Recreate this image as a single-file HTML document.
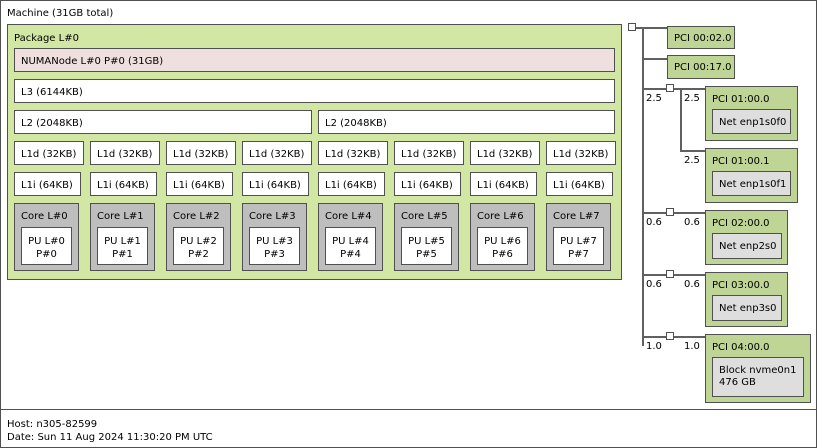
<!DOCTYPE html>
<html><head><meta charset="utf-8"><style>
*{box-sizing:border-box;margin:0;padding:0}
body{width:817px;height:448px;background:#fff;position:relative;overflow:hidden;font-family:"DejaVu Sans","Liberation Sans",sans-serif;font-size:10px;color:#000}
.b{position:absolute;border:1px solid #505050;line-height:12px;padding:7px 0 0 6px;white-space:nowrap}
.w{background:#fff}.g{background:#d2e7a4}.n{background:#efdfde}.c{background:#bebebe}.p{background:#bed595;padding-top:6px}.d{background:#dedede}
.b.pu{text-align:center;padding:7px 0 0 0;line-height:13px}
.t{position:absolute;white-space:nowrap;line-height:12px}
.l{position:absolute;background:#606060}
.sq{position:absolute;width:8px;height:8px;border:1px solid #505050;background:#fff}
</style></head><body>
<div class="b w" style="left:0;top:0;width:817px;height:410px"></div>
<div class="t" style="left:7px;top:8px">Machine (31GB total)</div>
<div class="b g" style="left:7px;top:24px;width:615px;height:256px;padding-top:8px">Package L#0</div>
<div class="b n" style="left:14px;top:48px;width:601px;height:24px">NUMANode L#0 P#0 (31GB)</div>
<div class="b w" style="left:14px;top:79px;width:601px;height:24px">L3 (6144KB)</div>
<div class="b w" style="left:14px;top:110px;width:298px;height:24px">L2 (2048KB)</div>
<div class="b w" style="left:318px;top:110px;width:297px;height:24px">L2 (2048KB)</div>

<div class="b w" style="left:14px;top:141px;width:70px;height:24px">L1d (32KB)</div>
<div class="b w" style="left:90px;top:141px;width:70px;height:24px">L1d (32KB)</div>
<div class="b w" style="left:166px;top:141px;width:70px;height:24px">L1d (32KB)</div>
<div class="b w" style="left:242px;top:141px;width:70px;height:24px">L1d (32KB)</div>
<div class="b w" style="left:318px;top:141px;width:70px;height:24px">L1d (32KB)</div>
<div class="b w" style="left:394px;top:141px;width:70px;height:24px">L1d (32KB)</div>
<div class="b w" style="left:470px;top:141px;width:70px;height:24px">L1d (32KB)</div>
<div class="b w" style="left:546px;top:141px;width:70px;height:24px">L1d (32KB)</div>

<div class="b w" style="left:14px;top:172px;width:67px;height:24px">L1i (64KB)</div>
<div class="b w" style="left:90px;top:172px;width:67px;height:24px">L1i (64KB)</div>
<div class="b w" style="left:166px;top:172px;width:67px;height:24px">L1i (64KB)</div>
<div class="b w" style="left:242px;top:172px;width:67px;height:24px">L1i (64KB)</div>
<div class="b w" style="left:318px;top:172px;width:67px;height:24px">L1i (64KB)</div>
<div class="b w" style="left:394px;top:172px;width:67px;height:24px">L1i (64KB)</div>
<div class="b w" style="left:470px;top:172px;width:67px;height:24px">L1i (64KB)</div>
<div class="b w" style="left:546px;top:172px;width:67px;height:24px">L1i (64KB)</div>

<div class="b c" style="left:14px;top:203px;width:65px;height:68px">Core L#0</div>
<div class="b c" style="left:90px;top:203px;width:65px;height:68px">Core L#1</div>
<div class="b c" style="left:166px;top:203px;width:65px;height:68px">Core L#2</div>
<div class="b c" style="left:242px;top:203px;width:65px;height:68px">Core L#3</div>
<div class="b c" style="left:318px;top:203px;width:65px;height:68px">Core L#4</div>
<div class="b c" style="left:394px;top:203px;width:65px;height:68px">Core L#5</div>
<div class="b c" style="left:470px;top:203px;width:65px;height:68px">Core L#6</div>
<div class="b c" style="left:546px;top:203px;width:65px;height:68px">Core L#7</div>

<div class="b w pu" style="left:21px;top:227px;width:51px;height:38px">PU L#0<br>P#0</div>
<div class="b w pu" style="left:97px;top:227px;width:51px;height:38px">PU L#1<br>P#1</div>
<div class="b w pu" style="left:173px;top:227px;width:51px;height:38px">PU L#2<br>P#2</div>
<div class="b w pu" style="left:249px;top:227px;width:51px;height:38px">PU L#3<br>P#3</div>
<div class="b w pu" style="left:325px;top:227px;width:51px;height:38px">PU L#4<br>P#4</div>
<div class="b w pu" style="left:401px;top:227px;width:51px;height:38px">PU L#5<br>P#5</div>
<div class="b w pu" style="left:477px;top:227px;width:51px;height:38px">PU L#6<br>P#6</div>
<div class="b w pu" style="left:553px;top:227px;width:51px;height:38px">PU L#7<br>P#7</div>

<!-- IO tree lines -->
<div class="l" style="left:635px;top:27px;width:32px;height:2px"></div>
<div class="l" style="left:642px;top:28px;width:2px;height:318px"></div>
<div class="l" style="left:643px;top:58px;width:24px;height:2px"></div>
<div class="l" style="left:643px;top:88px;width:62px;height:2px"></div>
<div class="l" style="left:680px;top:88px;width:2px;height:64px"></div>
<div class="l" style="left:681px;top:150px;width:24px;height:2px"></div>
<div class="l" style="left:643px;top:212px;width:62px;height:2px"></div>
<div class="l" style="left:643px;top:274px;width:62px;height:2px"></div>
<div class="l" style="left:643px;top:336px;width:62px;height:2px"></div>
<div class="sq" style="left:628px;top:23px"></div>
<div class="sq" style="left:666px;top:84px"></div>
<div class="sq" style="left:666px;top:208px"></div>
<div class="sq" style="left:666px;top:270px"></div>
<div class="sq" style="left:666px;top:332px"></div>

<div class="b p" style="left:667px;top:26px;width:68px;height:23px">PCI 00:02.0</div>
<div class="b p" style="left:667px;top:55px;width:68px;height:24px">PCI 00:17.0</div>

<div class="t" style="left:646px;top:93px">2.5</div><div class="t" style="left:684px;top:93px">2.5</div>
<div class="b p" style="left:705px;top:86px;width:93px;height:55px;padding-top:7px">PCI 01:00.0</div>
<div class="b d" style="left:712px;top:109px;width:79px;height:25px">Net enp1s0f0</div>
<div class="t" style="left:684px;top:155px">2.5</div>
<div class="b p" style="left:705px;top:148px;width:93px;height:55px;padding-top:7px">PCI 01:00.1</div>
<div class="b d" style="left:712px;top:171px;width:79px;height:25px">Net enp1s0f1</div>

<div class="t" style="left:646px;top:217px">0.6</div><div class="t" style="left:684px;top:217px">0.6</div>
<div class="b p" style="left:705px;top:210px;width:83px;height:55px;padding-top:7px">PCI 02:00.0</div>
<div class="b d" style="left:712px;top:233px;width:70px;height:26px">Net enp2s0</div>

<div class="t" style="left:646px;top:279px">0.6</div><div class="t" style="left:684px;top:279px">0.6</div>
<div class="b p" style="left:705px;top:272px;width:83px;height:55px;padding-top:7px">PCI 03:00.0</div>
<div class="b d" style="left:712px;top:295px;width:70px;height:26px">Net enp3s0</div>

<div class="t" style="left:646px;top:341px">1.0</div><div class="t" style="left:684px;top:341px">1.0</div>
<div class="b p" style="left:705px;top:334px;width:106px;height:69px;padding-top:7px">PCI 04:00.0</div>
<div class="b d" style="left:712px;top:357px;width:92px;height:40px">Block nvme0n1<br>476 GB</div>

<div class="b w" style="left:0;top:409px;width:817px;height:39px;padding:8px 0 0 6px;line-height:13px">Host: n305-82599<br>Date: Sun 11 Aug 2024 11:30:20 PM UTC</div>
</body></html>
